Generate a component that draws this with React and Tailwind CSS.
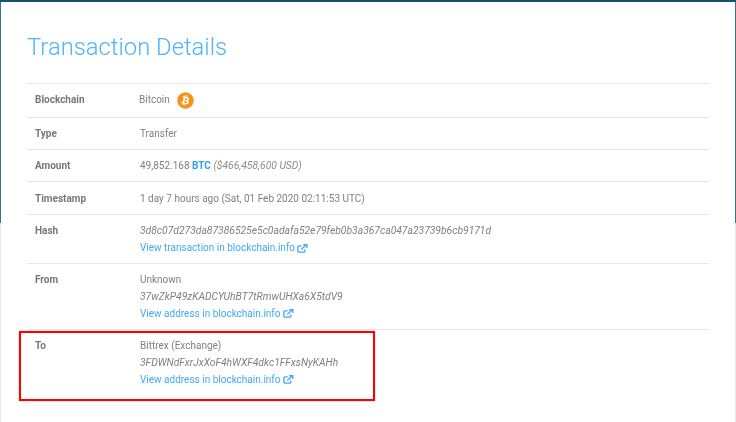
import React from "react";
import { FaBitcoin } from "react-icons/fa";

function OutIcon() {
  return (
    <svg viewBox="0 0 12 10" className="h-[9px] w-[11px]" fill="none" stroke="currentColor" strokeWidth="1.5">
      <path d="M8.6 6v1.8a1.3 1.3 0 0 1-1.3 1.3H2.1A1.3 1.3 0 0 1 .8 7.8V3.4a1.3 1.3 0 0 1 1.3-1.3h3" />
      <path d="M4.6 6 10 1" />
      <path d="M6.8.8h4v3.6" />
    </svg>
  );
}

function ChainLink({ children }) {
  return (
    <a className="flex items-center gap-[2px] text-[#42a9f5] blur-[0.3px]">
      {children}
      <OutIcon />
    </a>
  );
}

function Row({ label, children, className = "" }) {
  return (
    <div className={`flex border-t border-[#e6e6e6] px-2 pb-2 ${className}`}>
      <div className="w-[105px] shrink-0 font-bold text-[#777] blur-[0.3px]">{label}</div>
      <div className="flex flex-col">{children}</div>
    </div>
  );
}

export default function App() {
  return (
    <div className="relative h-[422px] w-[736px] overflow-hidden bg-[#e9e9e9] font-['Roboto',sans-serif] text-[10px] leading-[16.7px] text-[#808080]">
      <div className="absolute inset-x-0 top-0 h-[223px] bg-[#3f7189]" />
      <div className="absolute inset-x-0 top-0 h-[2px] bg-[#17506c]" />

      <div className="relative mx-[1px] mt-[2px] h-[420px] bg-white pl-[26px] pr-[26px]">
        <h1 className="pt-[30px] text-[23.8px] leading-[30px] font-light text-[#4db4fb] blur-[0.3px]">
          Transaction Details
        </h1>

        <div className="mt-[21px]">
          <Row label="Blockchain" className="h-[34px] pt-2">
            <div className="-ml-[1px] flex items-center gap-[7px] blur-[0.3px]">
              <span>Bitcoin</span>
              <FaBitcoin className="text-[17px] text-[#f7931a]" />
            </div>
          </Row>
          <Row label="Type" className="h-[32px] pt-2">
            <span className="blur-[0.3px]">Transfer</span>
          </Row>
          <Row label="Amount" className="h-[32px] pt-2">
            <span className="blur-[0.3px]">
              49,852.168 <b className="font-bold text-[#2f9fee]">BTC</b>{" "}
              <i className="text-[10.3px] text-[#8c8c8c]">($466,458,600 USD)</i>
            </span>
          </Row>
          <Row label="Timestamp" className="h-[33px] pt-[9px]">
            <span className="blur-[0.3px]">1 day 7 hours ago (Sat, 01 Feb 2020 02:11:53 UTC)</span>
          </Row>
          <Row label="Hash" className="h-[49px] pt-2">
            <i className="text-[10.3px] blur-[0.3px]">3d8c07d273da87386525e5c0adafa52e79feb0b3a367ca047a23739b6cb9171d</i>
            <ChainLink>View transaction in blockchain.info</ChainLink>
          </Row>
          <Row label="From" className="h-[66px] pt-[7px] leading-[17px]">
            <span className="blur-[0.3px]">Unknown</span>
            <i className="text-[10.3px] blur-[0.3px]">37wZkP49zKADCYUhBT7tRmwUHXa6X5tdV9</i>
            <ChainLink>View address in blockchain.info</ChainLink>
          </Row>
          <Row label="To" className="h-[66px] pt-[7px] leading-[17px]">
            <span className="blur-[0.3px]">Bittrex (Exchange)</span>
            <i className="text-[10.3px] blur-[0.3px]">3FDWNdFxrJxXoF4hWXF4dkc1FFxsNyKAHh</i>
            <ChainLink>View address in blockchain.info</ChainLink>
          </Row>
        </div>
      </div>

      {/* red highlight drawn on top of the To row */}
      <div className="absolute top-[331px] left-[19px] h-[70px] w-[356px] border-2 border-[#ff0000] shadow-[0_0_1px_#ff8888]" />
    </div>
  );
}
